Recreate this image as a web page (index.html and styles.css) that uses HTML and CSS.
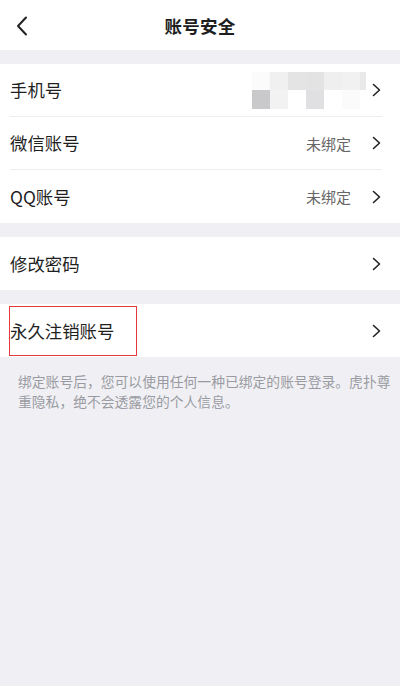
FILE: index.html
```html
<!DOCTYPE html>
<html lang="zh">
<head>
<meta charset="utf-8">
<title>账号安全</title>
<link rel="stylesheet" href="styles.css">
</head>
<body>
<div class="page">
  <header class="nav">
    <svg class="back" viewBox="0 0 12 20" width="12" height="20"><path d="M10 1.5 L2 10 L10 18.5" fill="none" stroke="#222" stroke-width="2" stroke-linecap="round" stroke-linejoin="round"/></svg>
    <h1 class="title">账号安全</h1>
  </header>
  <div class="gap"></div>
  <section class="group">
    <div class="row">
      <span class="label">手机号</span>
      <span class="mosaic">
        <i style="background:#fbfbfb"></i><i style="background:#f0f0f0"></i><i style="background:#e4e4e5"></i><i style="background:#e3e3e4"></i><i style="background:#efefef"></i><i style="background:#f1f1f1"></i><i style="background:#e9e9e9"></i>
        <i style="background:#c9c9cb"></i><i style="background:#f2f2f2"></i><i style="background:#ffffff"></i><i style="background:#e0e0e2"></i><i style="background:#ffffff"></i><i style="background:#fbfbfb"></i><i style="background:#ffffff"></i>
      </span>
      <svg class="chev" viewBox="0 0 9 14" width="9" height="14"><path d="M1.5 1.5 L7.5 7 L1.5 12.5" fill="none" stroke="#222" stroke-width="1.6" stroke-linecap="round" stroke-linejoin="round"/></svg>
    </div>
    <div class="row">
      <span class="label">微信账号</span>
      <span class="value">未绑定</span>
      <svg class="chev" viewBox="0 0 9 14" width="9" height="14"><path d="M1.5 1.5 L7.5 7 L1.5 12.5" fill="none" stroke="#222" stroke-width="1.6" stroke-linecap="round" stroke-linejoin="round"/></svg>
    </div>
    <div class="row">
      <span class="label">QQ账号</span>
      <span class="value">未绑定</span>
      <svg class="chev" viewBox="0 0 9 14" width="9" height="14"><path d="M1.5 1.5 L7.5 7 L1.5 12.5" fill="none" stroke="#222" stroke-width="1.6" stroke-linecap="round" stroke-linejoin="round"/></svg>
    </div>
  </section>
  <div class="gap"></div>
  <section class="group">
    <div class="row">
      <span class="label">修改密码</span>
      <svg class="chev" viewBox="0 0 9 14" width="9" height="14"><path d="M1.5 1.5 L7.5 7 L1.5 12.5" fill="none" stroke="#222" stroke-width="1.6" stroke-linecap="round" stroke-linejoin="round"/></svg>
    </div>
  </section>
  <div class="gap"></div>
  <section class="group">
    <div class="row highlight-row">
      <span class="label">永久注销账号</span>
      <span class="highlight"></span>
      <svg class="chev" viewBox="0 0 9 14" width="9" height="14"><path d="M1.5 1.5 L7.5 7 L1.5 12.5" fill="none" stroke="#222" stroke-width="1.6" stroke-linecap="round" stroke-linejoin="round"/></svg>
    </div>
  </section>
  <p class="note">绑定账号后，您可以使用任何一种已绑定的账号登录。虎扑尊重隐私，绝不会透露您的个人信息。</p>
</div>
</body>
</html>
```

FILE: styles.css
```css
* { box-sizing: border-box; }
html, body { margin: 0; padding: 0; }
body {
  background: #f0f0f4;
  font-family: "Noto Sans CJK SC", "Noto Sans", sans-serif;
  color: #222;
}
.page {
  width: 400px;
  min-height: 686px;
  background: #f0f0f4;
}
.nav {
  height: 50px;
  background: #fff;
  display: flex;
  align-items: center;
  justify-content: center;
  position: relative;
}
.back {
  position: absolute;
  left: 16px;
  top: 16px;
}
.title {
  margin: 0;
  font-size: 17.5px;
  font-weight: 700;
  color: #1e1e1e;
  letter-spacing: 0.3px;
}
.gap { height: 14px; }
.group {
  background: #fff;
  padding-left: 10px;
}
.row {
  height: 53px;
  display: flex;
  align-items: center;
  border-bottom: 1px solid #eeeef0;
  margin-right: 18px;
  padding-right: 1px;
  position: relative;
}
.group .row:last-child { border-bottom: none; }
.label {
  font-size: 17.4px;
  font-weight: 400;
  color: #1f1f1f;
  flex: 1;
  line-height: 1;
}
.value {
  font-size: 15px;
  color: #666;
  margin-right: 21px;
}
.chev { display: block; }
.mosaic {
  display: grid;
  grid-template-columns: repeat(6, 18px) 6px;
  grid-template-rows: 18px 19px;
  margin-right: 6px;
}
.mosaic i { display: block; }
.highlight {
  position: absolute;
  left: -1px;
  top: 2px;
  width: 128px;
  height: 50px;
  border: 1.5px solid #e5393f;
}
.note {
  margin: 0;
  padding: 14px 6px 0 18px;
  font-size: 13.8px;
  line-height: 20px;
  color: #9a9ba2;
}
```
